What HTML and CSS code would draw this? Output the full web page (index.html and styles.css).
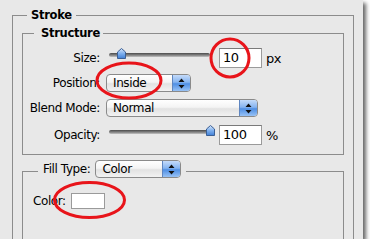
FILE: index.html
```html
<!DOCTYPE html>
<html>
<head>
  <title>Stroke</title>
  <link rel="stylesheet" href="styles.css">
</head>
<body>
  <div class="panel">
    <fieldset class="group outer">
      <legend>Stroke</legend>

      <fieldset class="group structure">
        <legend>Structure</legend>

        <div class="row">
          <span class="label">Size:</span>
          <div class="slider">
            <div class="track"></div>
            <svg class="thumb" style="left: 8px" width="9" height="11" viewBox="0 0 9 11">
              <defs>
                <linearGradient id="thumbA" x1="0" y1="0" x2="0" y2="1">
                  <stop offset="0" stop-color="#d6e6fa"/>
                  <stop offset="0.5" stop-color="#7fb0ee"/>
                  <stop offset="1" stop-color="#3f7fd6"/>
                </linearGradient>
              </defs>
              <path d="M4.5 0.5 L8.5 4 V10.5 H0.5 V4 Z" fill="url(#thumbA)" stroke="#3b5f94"/>
            </svg>
          </div>
          <span class="field">10</span>
          <span class="unit">px</span>
        </div>

        <div class="row">
          <span class="label">Position:</span>
          <div class="select position">
            <span class="value">Inside</span>
            <span class="arrows">
              <svg width="7" height="11" viewBox="0 0 7 11"><path d="M3.5 0.5 L6.5 4 H0.5 Z M0.5 7 H6.5 L3.5 10.5 Z" fill="#111"/></svg>
            </span>
          </div>
        </div>

        <div class="row">
          <span class="label">Blend Mode:</span>
          <div class="select blend">
            <span class="value">Normal</span>
            <span class="arrows">
              <svg width="7" height="11" viewBox="0 0 7 11"><path d="M3.5 0.5 L6.5 4 H0.5 Z M0.5 7 H6.5 L3.5 10.5 Z" fill="#111"/></svg>
            </span>
          </div>
        </div>

        <div class="row opacity">
          <span class="label">Opacity:</span>
          <div class="slider">
            <div class="track"></div>
            <svg class="thumb" style="left: 97px" width="9" height="11" viewBox="0 0 9 11">
              <defs>
                <linearGradient id="thumbB" x1="0" y1="0" x2="0" y2="1">
                  <stop offset="0" stop-color="#d6e6fa"/>
                  <stop offset="0.5" stop-color="#7fb0ee"/>
                  <stop offset="1" stop-color="#3f7fd6"/>
                </linearGradient>
              </defs>
              <path d="M4.5 0.5 L8.5 4 V10.5 H0.5 V4 Z" fill="url(#thumbB)" stroke="#3b5f94"/>
            </svg>
          </div>
          <span class="field">100</span>
          <span class="unit">%</span>
        </div>
      </fieldset>

      <fieldset class="group fill">
        <legend>
          <span>Fill Type:</span>
          <div class="select filltype">
            <span class="value">Color</span>
            <span class="arrows">
              <svg width="7" height="11" viewBox="0 0 7 11"><path d="M3.5 0.5 L6.5 4 H0.5 Z M0.5 7 H6.5 L3.5 10.5 Z" fill="#111"/></svg>
            </span>
          </div>
        </legend>

        <div class="color-row">
          <span>Color:</span>
          <span class="swatch"></span>
        </div>
      </fieldset>
    </fieldset>

    <!-- red annotation marks drawn over the dialog -->
    <svg class="marks" width="363" height="239" viewBox="0 0 363 239">
      <ellipse cx="230" cy="58" rx="19" ry="19" fill="none" stroke="#e8141a" stroke-width="3"/>
      <ellipse cx="129" cy="80.5" rx="32" ry="17.5" fill="none" stroke="#e8141a" stroke-width="3"/>
      <ellipse cx="89.5" cy="200" rx="35" ry="17.5" fill="none" stroke="#e8141a" stroke-width="3"/>
    </svg>
  </div>
</body>
</html>
```

FILE: styles.css
```css
body {
  margin: 0;
  background: #fff;
  font-family: "DejaVu Sans", sans-serif;
  font-size: 12px;
  letter-spacing: -0.4px;
  color: #000;
}
.panel {
  position: relative;
  width: 363px;
  height: 239px;
  background: #e8e8e8;
  box-shadow: 3px 3px 4px rgba(0, 0, 0, 0.6);
  overflow: hidden;
}
fieldset {
  margin: 0;
  padding: 0;
  min-width: 0;
  border: 1px solid #8c8c8c;
  box-sizing: border-box;
}
legend {
  line-height: 16px;
}
.outer {
  margin: 7px 0 0 12px;
  width: 342px;
  height: 300px;
  padding: 0 9px;
}
.outer > legend {
  margin-left: 5px;
  padding: 0 4px;
  font-size: 11.5px;
  font-weight: bold;
  letter-spacing: -0.3px;
}
.structure {
  margin-top: 2px;
  padding: 7px 0 9px;
}
.structure > legend {
  margin-left: 11px;
  padding: 0 3px 0 7px;
  font-size: 11.5px;
  font-weight: bold;
  letter-spacing: -0.3px;
}
.row {
  display: flex;
  align-items: center;
  height: 20px;
}
.row + .row {
  margin-top: 5px;
}
.row.opacity {
  margin-top: 7px;
}
.label {
  width: 77px;
  text-align: right;
  margin-right: 6px;
}

/* slider */
.slider {
  position: relative;
  width: 101px;
  height: 20px;
  margin: 0 9px 0 3px;
}
.track {
  position: absolute;
  left: 0;
  right: 0;
  top: 5px;
  height: 4px;
  border-radius: 2px;
  background: linear-gradient(#4a4a4a, #8a8a8a 60%, #c4c4c4);
}
.thumb {
  position: absolute;
  top: 0;
}

/* text fields */
.field {
  width: 43px;
  height: 20px;
  box-sizing: border-box;
  padding: 0 3px;
  line-height: 18px;
  font-size: 13px;
  background: #fff;
  border: 1px solid #9a9a9a;
  border-top-color: #7a7a7a;
}
.unit {
  margin-left: 4px;
  font-size: 13px;
}

/* popup menus */
.select {
  display: flex;
  height: 18px;
  box-sizing: border-box;
  border: 1px solid #8a8a8a;
  border-radius: 4px;
  background: linear-gradient(#ffffff, #f4f4f4 45%, #e2e2e2 55%, #f2f2f2);
  overflow: hidden;
}
.select .value {
  flex: 1;
  padding-left: 6px;
  line-height: 16px;
}
.select .arrows {
  width: 17px;
  display: flex;
  align-items: center;
  justify-content: center;
  border-left: 1px solid #5f86c0;
  background: linear-gradient(#c4dbfa, #86b4f0 45%, #4f8fe4 55%, #98c2f5);
}
.position {
  width: 85px;
}
.blend {
  width: 152px;
}
.filltype {
  width: 86px;
  margin-left: 5px;
}

/* fill type group */
.fill {
  margin-top: 5px;
  height: 200px;
  padding: 10px 0 0 10px;
}
.fill > legend {
  display: flex;
  align-items: flex-start;
  margin-left: 5px;
  padding: 0 5px 4px;
  line-height: 18px;
}
.color-row {
  display: flex;
  align-items: center;
  height: 18px;
}
.swatch {
  width: 34px;
  height: 16px;
  margin-left: 5px;
  box-sizing: border-box;
  background: #fff;
  border: 1px solid #9a9a9a;
}

.marks {
  position: absolute;
  left: 0;
  top: 0;
  pointer-events: none;
}
```
